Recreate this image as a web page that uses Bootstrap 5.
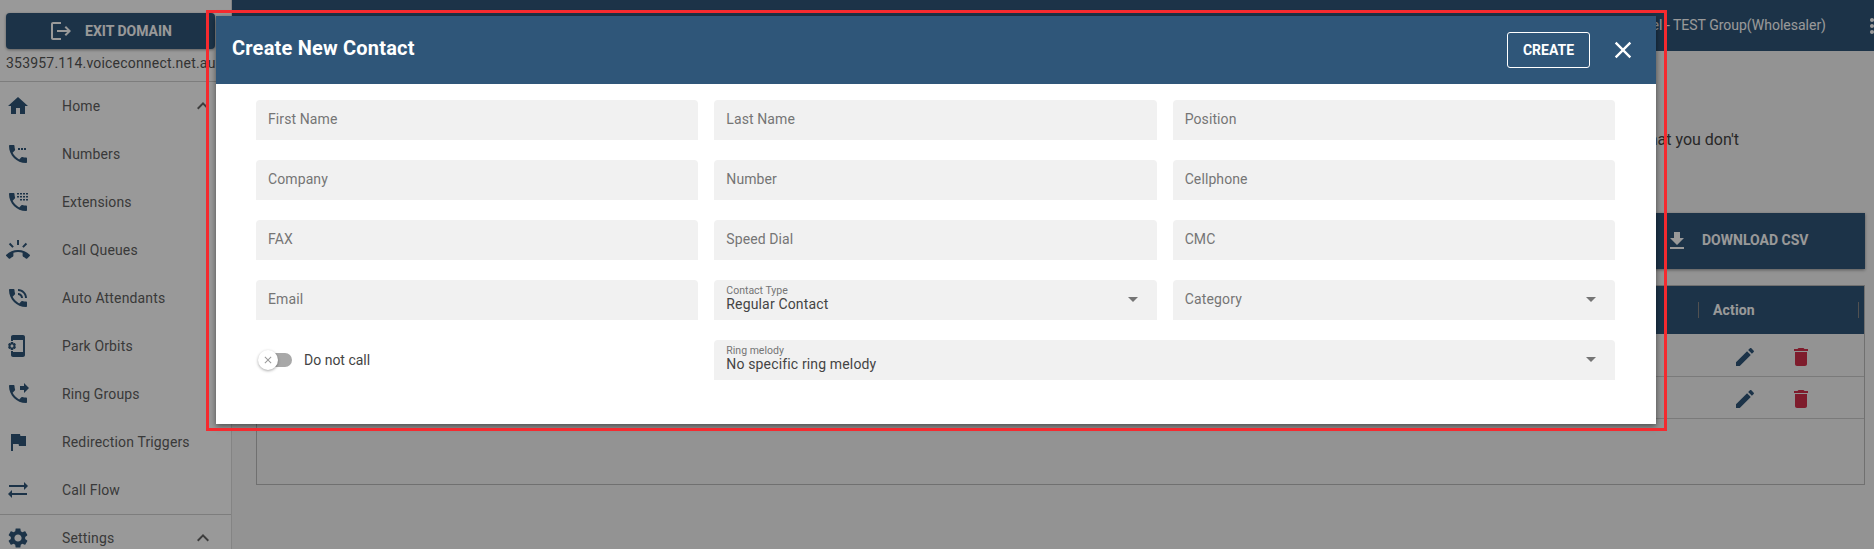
<!DOCTYPE html>
<html lang="en">
<head>
    <meta charset="UTF-8">
    <title>Create New Contact</title>
    <link href="https://cdn.jsdelivr.net/npm/bootstrap@5.3.0/dist/css/bootstrap.min.css" rel="stylesheet">
    <style>
        html, body { height: 100%; overflow: hidden; }
        body { font-family: Roboto, "Liberation Sans", sans-serif; font-size: 14px; letter-spacing: .15px; background: #f5f5f5; color: #555; }
        .ic { width: 24px; height: 24px; fill: currentColor; flex: none; }

        .side-bar { width: 232px; flex: none; background: #fff; border-right: 1px solid #ddd; height: 549px; overflow: hidden; }
        .exit-btn { width: 209px; height: 36px; margin: 13px 0 0 6px; background: #2f5679; color: #fff; border: 0; border-radius: 4px; font-weight: 700; font-size: 14px; box-shadow: 0 1px 3px rgba(0,0,0,.4); }
        .domain-line { padding: 4px 0 0 6px; height: 33px; white-space: nowrap; font-size: 14px; letter-spacing: .2px; color: #555; border-bottom: 1px solid #d0d0d0; }
        .side-item { height: 48px; padding-left: 6px; color: #5f5f5f; }
        .side-item .ic { color: #2f5679; }
        .side-item span { margin-left: 32px; }
        .side-item .chev { color: #666; margin-left: auto; margin-right: 16px; }
        .side-sep { border-top: 1px solid #d0d0d0; margin-bottom: -1px; }

        .top-bar { height: 51px; background: #2f5679; color: #fff; }
        .top-a { width: 335px; margin-left: 178px; font-size: 18px; white-space: nowrap; }
        .top-b { font-size: 18px; white-space: nowrap; }
        .top-user { font-size: 14px; margin-left: auto; margin-right: 34px; white-space: nowrap; letter-spacing: 0; }
        .kebab { margin-right: -10px; }

        .page-body { padding: 0 9px 0 24px; }
        .intro-line { padding: 77px 126px 0 0; text-align: right; font-size: 16px; letter-spacing: 0; color: #444; height: 162px; }
        .csv-btn { width: 400px; height: 56px; background: #2f5679; color: #fff; border: 0; box-shadow: 0 1px 3px rgba(0,0,0,.4); font-weight: 700; font-size: 14px; padding: 0 0 1px 200px; gap: 13px; }
        .data-box { margin-top: 16px; height: 200px; border: 1px solid #bbb; }
        .data-head { height: 48px; margin-bottom: 1px; background: #2f5679; color: #fff; font-weight: 700; padding-right: 5px; }
        .head-sep { width: 1px; height: 16px; background: #888; }
        .head-label { width: 159px; padding-left: 14px; }
        .data-row { height: 42px; padding: 2px 0 0 1476px; border-bottom: 1px solid #ccc; color: #2f5679; gap: 32px; }
        .data-row .del { color: #d3304a; }

        .back-drop { position: absolute; inset: 0; background: rgba(0,0,0,.4); }
        .contact-modal { position: absolute; left: 216px; top: 16px; width: 1440px; height: 408px; background: #fff; box-shadow: 0 2px 6px rgba(0,0,0,.5); }
        .modal-bar { height: 68px; background: #2f5679; color: #fff; padding: 0 21px 0 16px; }
        .modal-bar h2 { font-size: 20px; font-weight: 700; letter-spacing: .2px; margin: 0 0 5px; }
        .create-btn { width: 83px; height: 36px; padding: 0; color: #fff; background: transparent; border: 1px solid #fff; border-radius: 3px; font-size: 14px; font-weight: 700; margin-right: 21px; }
        .close-btn { width: 24px; height: 24px; padding: 0; border: 0; background: transparent; color: #fff; }
        .close-btn .ic { width: 28px; height: 28px; margin: -2px; display: block; }

        .form-area { display: grid; grid-template-columns: repeat(3, 1fr); gap: 20px 16px; padding: 16px 41px 0 40px; }
        .field-in { height: 40px; background: #f1f1f1; border: 0; border-radius: 4px 4px 0 0; padding: 0 12px 2px; font-size: 14px; letter-spacing: .1px; color: #444; }
        .field-in::placeholder { color: #757575; opacity: 1; }
        .field-in:focus { background: #f1f1f1; box-shadow: none; }
        .field-sel { height: 40px; background: #f1f1f1; border-radius: 4px 4px 0 0; padding: 0 12px 2px; position: relative; color: #757575; }
        .field-sel.has-val { display: flex; flex-direction: column; justify-content: flex-start; padding-top: 5px; }
        .field-sel small { font-size: 10.5px; line-height: 11px; letter-spacing: 0; color: #757575; }
        .field-sel b { font-weight: 400; font-size: 14px; line-height: 17px; color: #444; }
        .field-caret { position: absolute; right: 19px; top: 17px; width: 0; height: 0; border-left: 5px solid transparent; border-right: 5px solid transparent; border-top: 5px solid #757575; }
        .wide-cell { grid-column: span 2; }

        .toggle-cell { padding-left: 2px; color: #444; letter-spacing: 0; }
        .toggle-track { width: 34px; height: 20px; position: relative; margin-right: 12px; }
        .toggle-track::before { content: ""; position: absolute; left: 8px; right: 0; top: 3px; height: 14px; border-radius: 7px; background: #a8a8a8; }
        .toggle-knob { position: absolute; left: 0; top: 0; width: 20px; height: 20px; border-radius: 50%; background: #fff; box-shadow: 0 1px 3px rgba(0,0,0,.35); color: #999; }
        .toggle-knob svg { width: 12px; height: 12px; fill: currentColor; }

        .red-frame { position: absolute; left: 206px; top: 10px; width: 1461px; height: 421px; border: 3px solid #f52a2f; pointer-events: none; }
    </style>
</head>
<body>

<!-- icon set -->
<svg width="0" height="0" class="position-absolute">
    <defs>
        <path id="phone-s" d="M7.5 3H4c-.55 0-1 .45-1 1 0 9.39 7.61 17 17 17 .55 0 1-.45 1-1v-3.49c0-.55-.45-1-1-1-1.24 0-2.45-.2-3.57-.57-.1-.04-.21-.05-.31-.05-.26 0-.51.1-.71.29l-2.2 2.2c-2.83-1.45-5.15-3.76-6.59-6.59l2.2-2.2c.28-.28.36-.67.25-1.02C8.7 6.45 8.5 5.25 8.5 4c0-.55-.45-1-1-1z"/>
        <symbol id="i-home" viewBox="0 0 24 24"><path d="M10 20v-6h4v6h5v-8h3L12 3 2 12h3v8z"/></symbol>
        <symbol id="i-numbers" viewBox="0 0 24 24"><use href="#phone-s"/><path d="M12 6h2v2h-2zM15 6h2v2h-2zM18 6h2v2h-2z"/></symbol>
        <symbol id="i-ext" viewBox="0 0 24 24"><use href="#phone-s"/><path d="M11 3h2v1.5h-2zM14 3h2v1.5h-2zM17 3h2v1.5h-2zM20 3h2v1.5h-2zM11 6h2v1.5h-2zM14 6h2v1.5h-2zM17 6h2v1.5h-2zM20 6h2v1.5h-2zM14 9h2v1.5h-2zM17 9h2v1.5h-2zM20 9h2v1.5h-2z"/></symbol>
        <symbol id="i-queue" viewBox="0 0 24 24"><path d="M23.71 16.67C20.66 13.78 16.54 12 12 12 7.46 12 3.34 13.78.29 16.67c-.18.18-.29.43-.29.71 0 .28.11.53.29.71l2.48 2.48c.18.18.43.29.71.29.27 0 .52-.11.7-.28.79-.74 1.69-1.36 2.66-1.85.33-.16.56-.5.56-.9v-3.1c1.45-.48 3-.73 4.6-.73s3.15.25 4.6.72v3.1c0 .39.23.74.56.9.98.49 1.87 1.12 2.67 1.85.18.18.43.28.7.28.28 0 .53-.11.71-.29l2.48-2.48c.18-.18.29-.43.29-.71 0-.28-.12-.52-.3-.7zM21.16 6.26l-1.41-1.41-3.56 3.55 1.41 1.41s3.45-3.52 3.56-3.55zM13 2h-2v5h2V2zM6.4 9.81L7.81 8.4 4.26 4.84 2.84 6.26c.11.03 3.56 3.55 3.56 3.55z"/></symbol>
        <symbol id="i-auto" viewBox="0 0 24 24"><use href="#phone-s"/><path d="M12 3v2c3.87 0 7 3.13 7 7h2c0-4.97-4.03-9-9-9zm0 4v2c1.66 0 3 1.34 3 3h2c0-2.76-2.24-5-5-5z"/></symbol>
        <symbol id="i-park" viewBox="0 0 24 24"><path transform="matrix(-1 0 0 1 24 0)" d="M21.81 12.74l-.82-.63v-.22l.8-.63c.16-.12.2-.34.1-.51l-.85-1.48c-.07-.13-.21-.2-.35-.2-.05 0-.1.01-.15.03l-.95.38c-.08-.05-.11-.07-.19-.11l-.15-1.01c-.03-.21-.2-.36-.4-.36h-1.71c-.2 0-.37.15-.4.34l-.14 1.01c-.03.02-.07.03-.1.05l-.09.06-.95-.38c-.05-.02-.1-.03-.15-.03-.14 0-.27.07-.35.2l-.85 1.48c-.1.17-.06.39.1.51l.8.63v.23l-.8.63c-.16.12-.2.34-.1.51l.85 1.48c.07.13.21.2.35.2.05 0 .1-.01.15-.03l.95-.37c.08.05.12.07.2.11l.15 1.01c.03.2.2.34.4.34h1.71c.2 0 .37-.15.4-.34l.15-1.01c.03-.02.07-.03.1-.05l.09-.06.95.38c.05.02.1.03.15.03.14 0 .27-.07.35-.2l.85-1.48c.1-.17.06-.39-.1-.51zM18 13.5c-.83 0-1.5-.67-1.5-1.5s.67-1.5 1.5-1.5 1.5.67 1.5 1.5-.67 1.5-1.5 1.5zM17 18H7V6h10v1h2V3c0-1.1-.9-2-2-2H7c-1.1 0-2 .9-2 2v18c0 1.1.9 2 2 2h10c1.1 0 2-.9 2-2v-4h-2v1z"/></symbol>
        <symbol id="i-ring" viewBox="0 0 24 24"><use href="#phone-s"/><path d="M18 11l5-5-5-5v3h-4v4h4v3z"/></symbol>
        <symbol id="i-flag" viewBox="0 0 24 24"><path d="M14.4 6L14 4H5v17h2v-7h5.6l.4 2h7V6z"/></symbol>
        <symbol id="i-flow" viewBox="0 0 24 24"><path d="M22 8l-4-4v3H3v2h15v3l4-4zM2 16l4 4v-3h15v-2H6v-3l-4 4z"/></symbol>
        <symbol id="i-gear" viewBox="0 0 24 24"><path d="M19.14 12.94c.04-.3.06-.61.06-.94 0-.32-.02-.64-.07-.94l2.03-1.58c.18-.14.23-.41.12-.61l-1.92-3.32c-.12-.22-.37-.29-.59-.22l-2.39.96c-.5-.38-1.03-.7-1.62-.94l-.36-2.54c-.04-.24-.24-.41-.48-.41h-3.84c-.24 0-.43.17-.47.41l-.36 2.54c-.59.24-1.13.57-1.62.94l-2.39-.96c-.22-.08-.47 0-.59.22L2.74 8.87c-.12.21-.08.47.12.61l2.03 1.58c-.05.3-.09.63-.09.94s.02.64.07.94l-2.03 1.58c-.18.14-.23.41-.12.61l1.92 3.32c.12.22.37.29.59.22l2.39-.96c.5.38 1.03.7 1.62.94l.36 2.54c.05.24.24.41.48.41h3.84c.24 0 .44-.17.47-.41l.36-2.54c.59-.24 1.13-.56 1.62-.94l2.39.96c.22.08.47 0 .59-.22l1.92-3.32c.12-.22.07-.47-.12-.61l-2.01-1.58zM12 15.6c-1.98 0-3.6-1.62-3.6-3.6s1.62-3.6 3.6-3.6 3.6 1.62 3.6 3.6-1.62 3.6-3.6 3.6z"/></symbol>
        <symbol id="i-up" viewBox="0 0 24 24"><path d="M12 8l-6 6 1.41 1.41L12 10.83l4.59 4.58L18 14z"/></symbol>
        <symbol id="i-exit" viewBox="0 0 24 24"><path d="M17 7l-1.41 1.41L18.17 11H8v2h10.17l-2.58 2.58L17 17l5-5zM4 5h8V3H4c-1.1 0-2 .9-2 2v14c0 1.1.9 2 2 2h8v-2H4V5z"/></symbol>
        <symbol id="i-down" viewBox="0 0 24 24"><path d="M19 9h-4V3H9v6H5l7 7 7-7zM5 18v2h14v-2H5z"/></symbol>
        <symbol id="i-edit" viewBox="0 0 24 24"><path d="M3 17.25V21h3.75L17.81 9.94l-3.75-3.75L3 17.25zM20.71 7.04c.39-.39.39-1.02 0-1.41l-2.34-2.34c-.39-.39-1.02-.39-1.41 0l-1.83 1.83 3.75 3.75 1.83-1.83z"/></symbol>
        <symbol id="i-del" viewBox="0 0 24 24"><path d="M6 19c0 1.1.9 2 2 2h8c1.1 0 2-.9 2-2V7H6v12zM19 4h-3.5l-1-1h-5l-1 1H5v2h14V4z"/></symbol>
        <symbol id="i-x" viewBox="0 0 24 24"><path d="M19 6.41L17.59 5 12 10.59 6.41 5 5 6.41 10.59 12 5 17.59 6.41 19 12 13.41 17.59 19 19 17.59 13.41 12z"/></symbol>
        <symbol id="i-more" viewBox="0 0 24 24"><path d="M12 8c1.1 0 2-.9 2-2s-.9-2-2-2-2 .9-2 2 .9 2 2 2zm0 2c-1.1 0-2 .9-2 2s.9 2 2 2 2-.9 2-2-.9-2-2-2zm0 6c-1.1 0-2 .9-2 2s.9 2 2 2 2-.9 2-2-.9-2-2-2z"/></symbol>
    </defs>
</svg>

<div class="d-flex">
    <!-- Sidebar -->
    <aside class="side-bar">
        <button class="exit-btn d-flex align-items-center justify-content-center gap-2">
            <svg class="ic"><use href="#i-exit"/></svg><span class="ms-1">EXIT DOMAIN</span>
        </button>
        <div class="domain-line">353957.114.voiceconnect.net.au</div>
        <div class="side-item d-flex align-items-center"><svg class="ic"><use href="#i-home"/></svg><span>Home</span><svg class="ic chev"><use href="#i-up"/></svg></div>
        <div class="side-item d-flex align-items-center"><svg class="ic"><use href="#i-numbers"/></svg><span>Numbers</span></div>
        <div class="side-item d-flex align-items-center"><svg class="ic"><use href="#i-ext"/></svg><span>Extensions</span></div>
        <div class="side-item d-flex align-items-center"><svg class="ic"><use href="#i-queue"/></svg><span>Call Queues</span></div>
        <div class="side-item d-flex align-items-center"><svg class="ic"><use href="#i-auto"/></svg><span>Auto Attendants</span></div>
        <div class="side-item d-flex align-items-center"><svg class="ic"><use href="#i-park"/></svg><span>Park Orbits</span></div>
        <div class="side-item d-flex align-items-center"><svg class="ic"><use href="#i-ring"/></svg><span>Ring Groups</span></div>
        <div class="side-item d-flex align-items-center"><svg class="ic"><use href="#i-flag"/></svg><span>Redirection Triggers</span></div>
        <div class="side-item d-flex align-items-center"><svg class="ic"><use href="#i-flow"/></svg><span>Call Flow</span></div>
        <div class="side-sep"></div>
        <div class="side-item d-flex align-items-center"><svg class="ic"><use href="#i-gear"/></svg><span>Settings</span><svg class="ic chev"><use href="#i-up"/></svg></div>
    </aside>

    <!-- Main page behind the dialog -->
    <div class="flex-grow-1">
        <div class="top-bar d-flex align-items-center">
            <div class="top-a">353957.114.voiceconnect</div>
            <div class="top-b">Enterprise</div>
            <div class="top-user">Reseller Panel - TEST Group(Wholesaler)</div>
            <svg class="ic kebab"><use href="#i-more"/></svg>
        </div>
        <div class="page-body">
            <div class="intro-line">that you don't</div>
            <div class="d-flex justify-content-end">
                <button class="csv-btn d-flex align-items-center"><svg class="ic"><use href="#i-down"/></svg>DOWNLOAD CSV</button>
            </div>
            <div class="data-box">
                <div class="data-head d-flex align-items-center justify-content-end">
                    <div class="head-sep"></div>
                    <div class="head-label">Action</div>
                    <div class="head-sep"></div>
                </div>
                <div class="data-row d-flex align-items-center"><svg class="ic"><use href="#i-edit"/></svg><svg class="ic del"><use href="#i-del"/></svg></div>
                <div class="data-row d-flex align-items-center"><svg class="ic"><use href="#i-edit"/></svg><svg class="ic del"><use href="#i-del"/></svg></div>
            </div>
        </div>
    </div>
</div>

<div class="back-drop"></div>

<!-- Dialog -->
<div class="contact-modal">
    <div class="modal-bar d-flex align-items-center">
        <h2 class="flex-grow-1">Create New Contact</h2>
        <button class="create-btn">CREATE</button>
        <button class="close-btn"><svg class="ic"><use href="#i-x"/></svg></button>
    </div>
    <form class="form-area">
        <input type="text" class="form-control field-in" placeholder="First Name">
        <input type="text" class="form-control field-in" placeholder="Last Name">
        <input type="text" class="form-control field-in" placeholder="Position">
        <input type="text" class="form-control field-in" placeholder="Company">
        <input type="text" class="form-control field-in" placeholder="Number">
        <input type="text" class="form-control field-in" placeholder="Cellphone">
        <input type="text" class="form-control field-in" placeholder="FAX">
        <input type="text" class="form-control field-in" placeholder="Speed Dial">
        <input type="text" class="form-control field-in" placeholder="CMC">
        <input type="text" class="form-control field-in" placeholder="Email">
        <div class="field-sel has-val"><small>Contact Type</small><b>Regular Contact</b><i class="field-caret"></i></div>
        <div class="field-sel d-flex align-items-center">Category<i class="field-caret"></i></div>
        <div class="toggle-cell d-flex align-items-center">
            <div class="toggle-track">
                <div class="toggle-knob d-flex align-items-center justify-content-center"><svg><use href="#i-x"/></svg></div>
            </div>
            Do not call
        </div>
        <div class="field-sel has-val wide-cell"><small>Ring melody</small><b>No specific ring melody</b><i class="field-caret"></i></div>
    </form>
</div>

<div class="red-frame"></div>

<script src="https://cdn.jsdelivr.net/npm/bootstrap@5.3.0/dist/js/bootstrap.bundle.min.js"></script>
</body>
</html>
